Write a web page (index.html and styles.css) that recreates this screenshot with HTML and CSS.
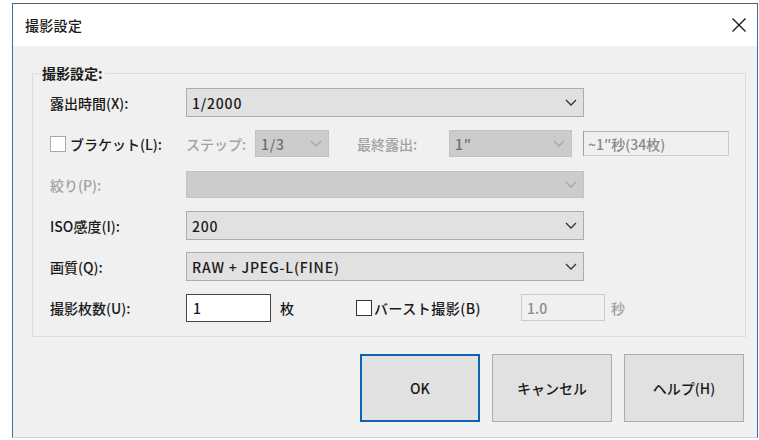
FILE: index.html
```html
<!DOCTYPE html>
<html lang="ja">
<head>
<meta charset="utf-8">
<title>撮影設定</title>
<link rel="stylesheet" href="styles.css">
</head>
<body>
<div class="window">
  <div class="titlebar">
    <span class="title">撮影設定</span>
    <span class="close" aria-label="閉じる">
      <svg width="16" height="16" viewBox="0 0 16 16"><path d="M1.5 1.5 L14.5 14.5 M14.5 1.5 L1.5 14.5" stroke="#1a1a1a" stroke-width="1.4" fill="none"/></svg>
    </span>
  </div>
  <div class="client">
    <fieldset class="group">
      <legend>撮影設定:</legend>
      <div class="rows">
        <div class="row">
          <span class="lbl">露出時間(X):</span>
          <div class="combo wide"><span class="val">1/2000</span><svg class="chev" width="12" height="7" viewBox="0 0 12 7"><path d="M1 1 L6 6 L11 1" fill="none" stroke-width="1.3"/></svg></div>
        </div>
        <div class="row">
          <span class="lbl check-lbl"><span class="box light"></span>ブラケット(L):</span>
          <span class="lbl dim step-lbl">ステップ:</span>
          <div class="combo off step"><span class="val">1/3</span><svg class="chev" width="12" height="7" viewBox="0 0 12 7"><path d="M1 1 L6 6 L11 1" fill="none" stroke-width="1.3"/></svg></div>
          <span class="lbl dim final-lbl">最終露出:</span>
          <div class="combo off final"><span class="val">1″</span><svg class="chev" width="12" height="7" viewBox="0 0 12 7"><path d="M1 1 L6 6 L11 1" fill="none" stroke-width="1.3"/></svg></div>
          <div class="field range">~1″秒(34枚)</div>
        </div>
        <div class="row">
          <span class="lbl dim">絞り(P):</span>
          <div class="combo off wide"><span class="val"></span><svg class="chev" width="12" height="7" viewBox="0 0 12 7"><path d="M1 1 L6 6 L11 1" fill="none" stroke-width="1.3"/></svg></div>
        </div>
        <div class="row">
          <span class="lbl">ISO感度(I):</span>
          <div class="combo wide"><span class="val">200</span><svg class="chev" width="12" height="7" viewBox="0 0 12 7"><path d="M1 1 L6 6 L11 1" fill="none" stroke-width="1.3"/></svg></div>
        </div>
        <div class="row">
          <span class="lbl">画質(Q):</span>
          <div class="combo wide"><span class="val">RAW + JPEG-L(FINE)</span><svg class="chev" width="12" height="7" viewBox="0 0 12 7"><path d="M1 1 L6 6 L11 1" fill="none" stroke-width="1.3"/></svg></div>
        </div>
        <div class="row">
          <span class="lbl">撮影枚数(U):</span>
          <div class="edit count">1</div>
          <span class="unit">枚</span>
          <span class="burst"><span class="box"></span>バースト撮影(B)</span>
          <div class="field interval">1.0</div>
          <span class="unit dim">秒</span>
        </div>
      </div>
    </fieldset>
    <div class="buttons">
      <span class="btn default">OK</span>
      <span class="btn">キャンセル</span>
      <span class="btn">ヘルプ(H)</span>
    </div>
  </div>
</div>
</body>
</html>
```
FILE: styles.css
```css
html, body {
  margin: 0;
  padding: 0;
  background: #ffffff;
}

body {
  font-family: "Noto Sans CJK JP", "Noto Sans", sans-serif;
  font-size: 14px;
  color: #1a1a1a;
  padding: 3px 0 0 12px;
}

.window {
  width: 744px;
  height: 433px;
  border: 1px solid #3d6f98;
  border-top-color: #5a5a5a;
  border-bottom-color: #c9d4dd;
  display: flex;
  flex-direction: column;
  background: #f0f0f0;
}

/* caption bar */
.titlebar {
  height: 42px;
  background: #ffffff;
  display: flex;
  align-items: center;
  justify-content: space-between;
  padding: 0 10px 0 12px;
}

.title {
  font-weight: 500;
  font-size: 14px;
  letter-spacing: 0.3px;
}

.close {
  display: flex;
  width: 16px;
  height: 16px;
}

.client {
  flex: 1;
  padding: 18px 11px 0 19px;
  display: flex;
  flex-direction: column;
}

/* group box */
.group {
  margin: 0;
  padding: 0;
  border: 1px solid #dcdcdc;
  min-width: 0;
}

.group legend {
  margin-left: 8px;
  padding: 0 2px 0 1px;
  font-weight: 700;
  font-size: 14px;
  line-height: 18px;
}

.rows {
  padding: 6px 0 14px 17px;
  display: flex;
  flex-direction: column;
  gap: 12px;
}

.row {
  height: 29px;
  display: flex;
  align-items: center;
}

.lbl {
  width: 136px;
  flex: none;
  font-weight: 500;
  white-space: nowrap;
}

.dim {
  color: #a2a2a2;
}

.check-lbl {
  display: flex;
  align-items: center;
  gap: 4px;
}

.box {
  width: 14px;
  height: 14px;
  border: 1px solid #333333;
  background: #ffffff;
  flex: none;
}

.box.light {
  border-color: #a8a8a8;
}

.step-lbl {
  width: 69px;
}

.final-lbl {
  width: 92px;
  margin-left: 28px;
}

/* drop-down lists */
.combo {
  height: 29px;
  box-sizing: border-box;
  border: 1px solid #adadad;
  background: #e1e1e1;
  display: flex;
  align-items: center;
  justify-content: space-between;
  padding: 0 6px 0 5px;
  font-weight: 500;
}

.combo .val {
  letter-spacing: 0.8px;
}

.combo .chev path {
  stroke: #333333;
}

.combo.off {
  background: #cccccc;
  border-color: #c2c2c2;
  color: #6e6e6e;
  height: 27px;
}

.combo.off .chev path {
  stroke: #a6a6a6;
}

.combo.wide {
  width: 398px;
}

.combo.step {
  width: 74px;
}

.combo.final {
  width: 123px;
}

/* read-only text boxes */
.field {
  box-sizing: border-box;
  border: 1px solid #cccccc;
  background: #f0f0f0;
  color: #8a8a8a;
  display: flex;
  align-items: center;
  padding-left: 4px;
  font-weight: 500;
}

.field.range {
  width: 146px;
  height: 25px;
  margin-left: 11px;
  border-left-color: #8da2b4;
  border-top-color: #aab6c0;
}

.field.interval {
  width: 84px;
  height: 27px;
  padding-left: 5px;
}

.edit {
  box-sizing: border-box;
  height: 28px;
  border: 1px solid #3f4650;
  background: #ffffff;
  display: flex;
  align-items: center;
  padding-left: 6px;
  font-weight: 500;
}

.edit.count {
  width: 85px;
}

.unit {
  margin-left: 9px;
  font-weight: 500;
}

.unit.dim {
  margin-left: 6px;
}

.burst {
  margin-left: 62px;
  width: 165px;
  display: flex;
  align-items: center;
  gap: 2px;
  font-weight: 500;
  white-space: nowrap;
  letter-spacing: 0.5px;
}

/* dialog buttons */
.buttons {
  display: flex;
  justify-content: flex-end;
  gap: 12px;
  margin-top: 17px;
  padding-right: 2px;
}

.btn {
  width: 120px;
  height: 68px;
  box-sizing: border-box;
  border: 1px solid #adadad;
  background: #e1e1e1;
  display: flex;
  align-items: center;
  justify-content: center;
  font-weight: 500;
}

.btn.default {
  border: 2px solid #0f62b0;
}
```
